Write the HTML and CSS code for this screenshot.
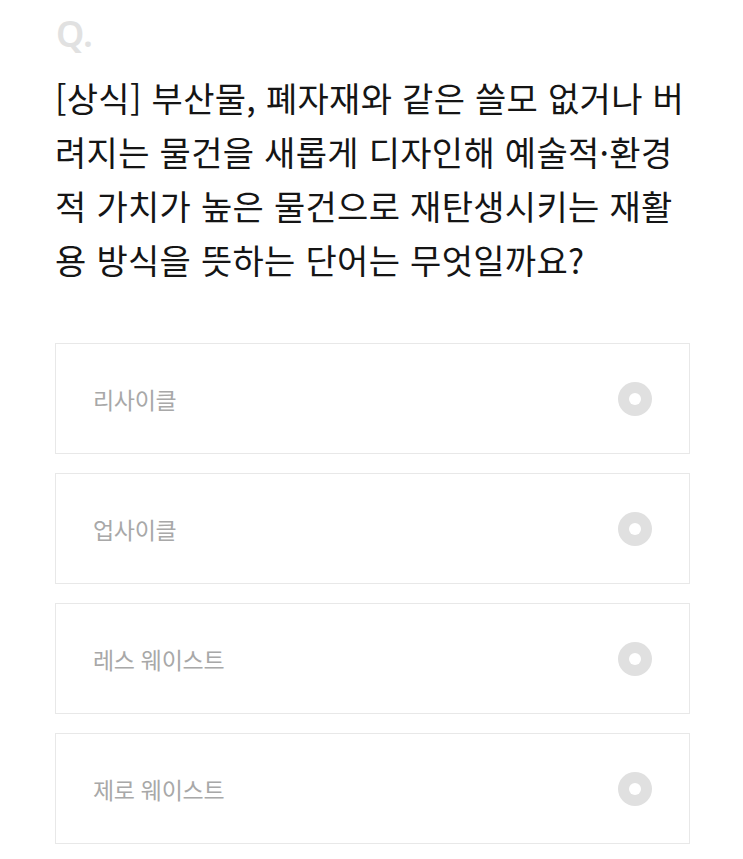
FILE: index.html
```html
<!DOCTYPE html>
<html lang="ko">
<head>
<meta charset="utf-8">
<link rel="stylesheet" href="styles.css">
</head>
<body>
<div class="quiz">
  <div class="qmark">Q.</div>
  <p class="question">[상식] 부산물, 폐자재와 같은 쓸모 없거나 버<br>려지는 물건을 새롭게 디자인해 예술적·환경<br>적 가치가 높은 물건으로 재탄생시키는 재활<br>용 방식을 뜻하는 단어는 무엇일까요?</p>
  <ul class="options">
    <li class="option"><span class="label">리사이클</span><span class="radio"></span></li>
    <li class="option"><span class="label">업사이클</span><span class="radio"></span></li>
    <li class="option"><span class="label">레스 웨이스트</span><span class="radio"></span></li>
    <li class="option"><span class="label">제로 웨이스트</span><span class="radio"></span></li>
  </ul>
</div>
</body>
</html>
```
FILE: styles.css
```css
html, body {
  margin: 0;
  padding: 0;
  background: #ffffff;
}
body {
  font-family: "Noto Sans CJK KR", "Noto Sans", sans-serif;
}
.quiz {
  padding: 12px 53px 0 55px;
}
.qmark {
  font-family: "Noto Sans", "Liberation Sans", sans-serif;
  font-weight: 600;
  font-size: 36px;
  line-height: 44px;
  color: #e1e1e1;
  padding-left: 1px;
}
.question {
  margin: 15px 0 0 0;
  font-size: 34px;
  line-height: 54px;
  color: #151515;
  letter-spacing: 0.3px;
  white-space: nowrap;
}
.options {
  list-style: none;
  margin: 56px 0 0 0;
  padding: 0;
  display: flex;
  flex-direction: column;
  gap: 19px;
}
.option {
  height: 109px;
  border: 1px solid #e8e8e8;
  display: flex;
  align-items: center;
  justify-content: space-between;
  padding: 0 37px 0 37px;
}
.label {
  font-size: 23px;
  color: #a8a8a8;
  letter-spacing: -0.3px;
}
.radio {
  width: 34px;
  height: 34px;
  border-radius: 50%;
  background: #e0e0e0;
  display: flex;
  align-items: center;
  justify-content: center;
}
.radio::after {
  content: "";
  width: 12px;
  height: 12px;
  border-radius: 50%;
  background: #ffffff;
}
```
